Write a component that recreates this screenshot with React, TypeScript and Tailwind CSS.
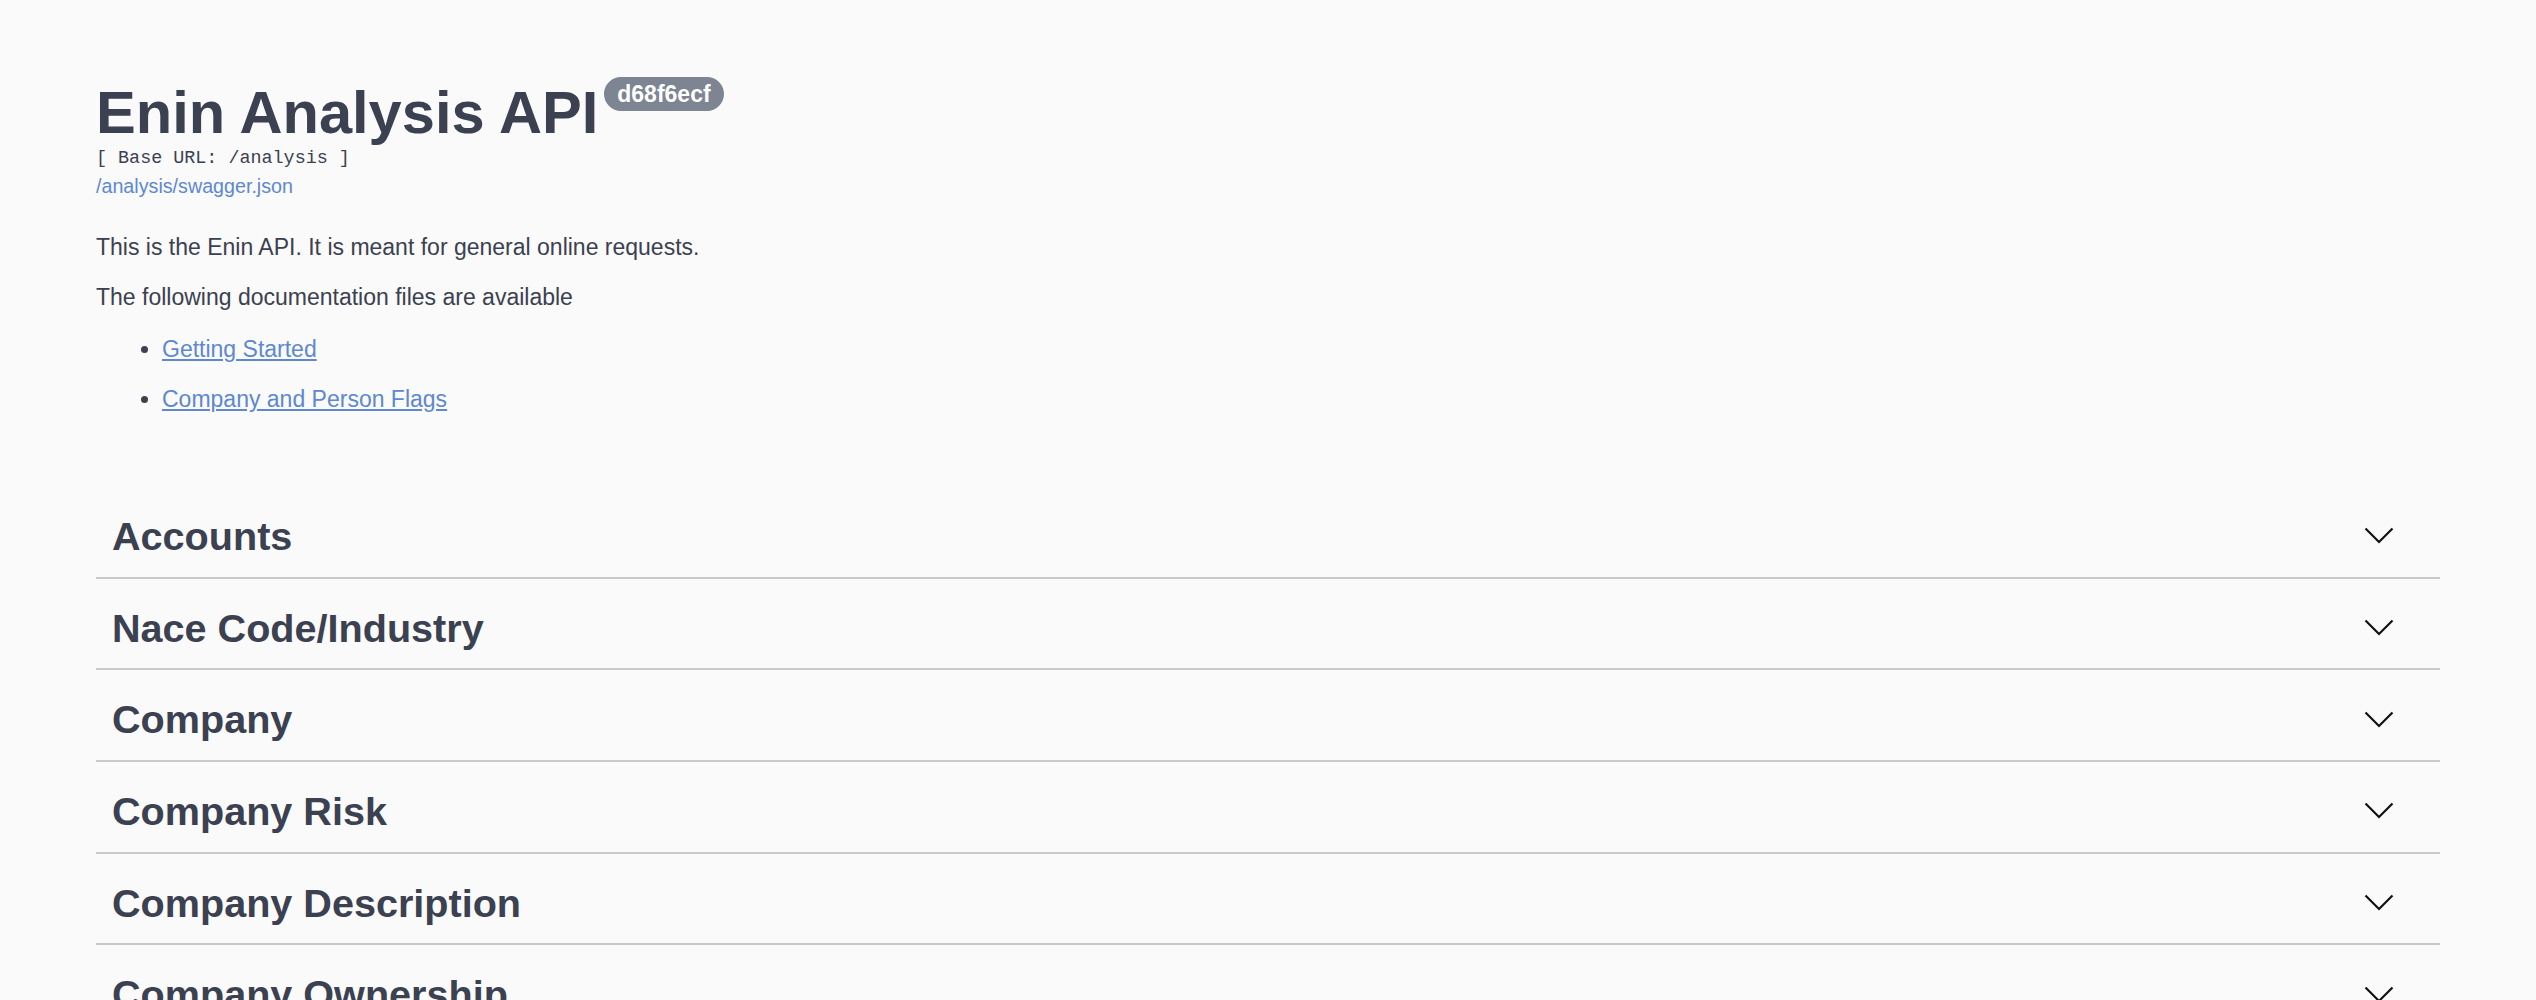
const sections = [
  "Accounts",
  "Nace Code/Industry",
  "Company",
  "Company Risk",
  "Company Description",
  "Company Ownership",
];

function Chevron() {
  return (
    <svg width="30" height="17" viewBox="0 0 30 17" fill="none" aria-hidden="true">
      <polyline points="1.5,1.5 15,15 28.5,1.5" stroke="#111" strokeWidth="2.2" />
    </svg>
  );
}

export default function App() {
  return (
    <div
      className="min-h-screen bg-[#fafafa] px-[96px] pt-[79px] text-[#3b4151]"
      style={{ fontFamily: '"Liberation Sans", Arial, sans-serif' }}
    >
      <div className="flex items-start">
        <h2 className="text-[59.6px] leading-[68px] font-bold">Enin Analysis API</h2>
        <span className="ml-[6px] -mt-[2px] rounded-full bg-[#7d8492] px-[13px] py-[4px] text-[23px] leading-[26px] font-bold text-white">
          d68f6ecf
        </span>
      </div>
      <pre className="mt-[1px] text-[18.4px] leading-[22px] font-['Liberation_Mono',monospace]">
        [ Base URL: /analysis ]
      </pre>
      <a className="mt-[5px] block text-[19.7px] leading-[23px] text-[#5e88cf]" href="#">
        /analysis/swagger.json
      </a>

      <div className="text-[23px] leading-[34px]">
        <p className="mt-[32px]">This is the Enin API. It is meant for general online requests.</p>
        <p className="mt-4">The following documentation files are available</p>
        <ul className="list-disc pl-[66px]">
          <li className="mt-[18px]">
            <a className="text-[#5e88cf] underline" href="#">Getting Started</a>
          </li>
          <li className="mt-4">
            <a className="text-[#5e88cf] underline" href="#">Company and Person Flags</a>
          </li>
        </ul>
      </div>

      <div className="mt-[79px] flex flex-col">
        {sections.map((name) => (
          <div key={name} className="mb-2 flex h-[83.7px] items-center justify-between border-b-2 border-[#c8c9cd] pl-4 pr-[46px]">
            <h3 className="text-[39.6px] leading-[46px] font-bold">{name}</h3>
            <Chevron />
          </div>
        ))}
      </div>
    </div>
  );
}
